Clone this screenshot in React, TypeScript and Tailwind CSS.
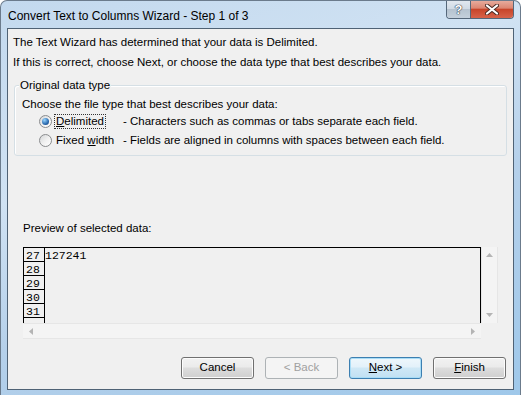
import React from "react";

const ui = "font-['Liberation_Sans',Arial,sans-serif]";

function Radio({ checked }: { checked?: boolean }) {
  return (
    <span className="w-[13px] h-[13px] shrink-0 rounded-full border border-[#8a8c8e] bg-gradient-to-br from-[#d4d6d8] via-[#f0f0f0] to-[#ffffff] flex items-center justify-center">
      {checked && (
        <span className="w-[7px] h-[7px] rounded-full bg-[radial-gradient(circle_at_35%_30%,#9ad6ff,#2a6bb0_60%,#173f75)]" />
      )}
    </span>
  );
}

function Arrow({ dir }: { dir: "up" | "down" | "left" | "right" }) {
  const pts = {
    up: "0,4 7,4 3.5,0",
    down: "0,0 7,0 3.5,4",
    left: "4,0 4,7 0,3.5",
    right: "0,0 0,7 4,3.5",
  }[dir];
  const vertical = dir === "up" || dir === "down";
  return (
    <svg width={vertical ? 7 : 4} height={vertical ? 4 : 7} viewBox={vertical ? "0 0 7 4" : "0 0 4 7"}>
      <polygon points={pts} fill="#b4b4b4" />
    </svg>
  );
}

function Button({
  children,
  disabled,
  focused,
}: {
  children: React.ReactNode;
  disabled?: boolean;
  focused?: boolean;
}) {
  return (
    <div
      className={
        "w-[73px] h-[22px] rounded-[3px] border flex items-center justify-center text-[11.5px] " +
        (disabled
          ? "border-[#adb2b5] bg-[#f4f4f4] text-[#a0a0a0]"
          : focused
          ? "border-[#3c7fb1] bg-[linear-gradient(#eef7fc_0%,#e3f1fa_45%,#cfe8f6_50%,#c1e0f2_100%)] shadow-[inset_0_0_0_1px_#a8dcf6] text-black"
          : "border-[#707070] bg-[linear-gradient(#f2f2f2_0%,#ebebeb_45%,#dddddd_50%,#cfcfcf_100%)] shadow-[inset_0_0_0_1px_#fcfcfc] text-black")
      }
    >
      {children}
    </div>
  );
}

export default function App() {
  const rows = ["27", "28", "29", "30", "31", ""];
  return (
    <div
      className={
        "w-[521px] h-[395px] overflow-hidden flex flex-col px-[6px] pb-[5px] rounded-t-[7px] border-x border-t border-[#6b7b8c] bg-[linear-gradient(160deg,#c3d9ee_0%,#d0e2f3_35%,#b5d0ea_60%,#9fc8ea_100%)] " +
        ui
      }
    >
      {/* title bar */}
      <div className="h-[27px] flex items-start justify-between shrink-0">
        <div className="pt-[6px] pl-[1px] text-[12px] text-black">
          Convert Text to Columns Wizard - Step 1 of 3
        </div>
        <div className="flex -mt-px rounded-b-[4px] border border-t-0 border-[#55677a] overflow-hidden">
          <div className="w-[23px] h-[18px] bg-[linear-gradient(#e3e9f0_0%,#d0dae5_50%,#b5c2cf_51%,#c4d0dc_100%)] flex items-center justify-center text-white font-bold text-[13px] leading-none [text-shadow:0_0_1px_#2c3a4a,0_0_1px_#2c3a4a,0_0_1px_#2c3a4a]">
            ?
          </div>
          <div className="w-[43px] h-[18px] border-l border-[#55677a] bg-[linear-gradient(#e8b0a2_0%,#dc8672_45%,#c8452a_52%,#d7624a_100%)] flex items-center justify-center">
            <svg width="14" height="11" viewBox="0 0 14 11">
              <path d="M2 1.5 L12 9.5 M12 1.5 L2 9.5" stroke="#4a2a24" strokeWidth="4" strokeLinecap="round" />
              <path d="M2 1.5 L12 9.5 M12 1.5 L2 9.5" stroke="#ffffff" strokeWidth="2.2" strokeLinecap="round" />
            </svg>
          </div>
        </div>
      </div>

      {/* client area */}
      <div className="flex-1 bg-[#f0f0f0] border border-[#4f6275] flex flex-col text-[11.5px] text-black">
        <div className="pl-[5px] mt-[3px] leading-[20px]">
          <div>The Text Wizard has determined that your data is Delimited.</div>
          <div>If this is correct, choose Next, or choose the data type that best describes your data.</div>
        </div>

        {/* group box */}
        <div className="relative mx-[6px] mt-[13px] h-[71px] rounded-[3px] border border-[#d5dfe5] shadow-[inset_1px_1px_0_#ffffff] pl-[7px] pt-[10px]">
          <div className="absolute -top-[9px] left-[4px] px-[1px] bg-[#f0f0f0] leading-[16px]">Original data type</div>
          <div className="leading-[16px]">Choose the file type that best describes your data:</div>
          <div className="flex items-center h-[19px] pl-[17px]">
            <Radio checked />
            <div className="w-[71px] pl-[3px] shrink-0 flex">
              <span className="outline outline-1 outline-dotted outline-[#333] px-[1px] leading-[13px]">
                <span className="underline">D</span>elimited
              </span>
            </div>
            <div>- Characters such as commas or tabs separate each field.</div>
          </div>
          <div className="flex items-center h-[19px] pl-[17px]">
            <Radio />
            <div className="w-[71px] pl-[4px] shrink-0">
              Fixed <span className="underline">w</span>idth
            </div>
            <div>- Fields are aligned in columns with spaces between each field.</div>
          </div>
        </div>

        <div className="pl-[15px] mt-[64px] leading-[16px]">Preview of selected data:</div>

        {/* preview */}
        <div className="ml-[15px] mt-[11px] w-[476px] h-[92px] flex flex-col">
          <div className="flex h-[76px]">
            <div className="w-[458px] border-t border-x border-black flex overflow-hidden font-['Liberation_Mono',monospace] text-[11.5px]">
              <div className="w-[21px] border-r border-black flex flex-col shrink-0">
                {rows.map((n, i) => (
                  <div key={i} className="h-[14px] shrink-0 border-b border-black leading-[15px] pl-[2px]">
                    {n}
                  </div>
                ))}
              </div>
              <div className="leading-[15px]">127241</div>
            </div>
            <div className="w-[17px] bg-[#f4f4f4] border-x border-[#e6e6e6] flex flex-col items-center justify-between py-[6px]">
              <Arrow dir="up" />
              <Arrow dir="down" />
            </div>
          </div>
          <div className="flex h-[16px]">
            <div className="w-[458px] bg-[#f4f4f4] border-y border-[#e6e6e6] flex items-center justify-between px-[6px]">
              <Arrow dir="left" />
              <Arrow dir="right" />
            </div>
            <div className="w-[17px] bg-[#f0f0f0]" />
          </div>
        </div>

        {/* buttons */}
        <div className="mt-[18px] flex justify-end gap-[11px] pr-[7px]">
          <Button>Cancel</Button>
          <Button disabled>&lt; Back</Button>
          <Button focused>
            <span className="underline">N</span>ext &gt;
          </Button>
          <Button>
            <span className="underline">F</span>inish
          </Button>
        </div>
      </div>
    </div>
  );
}
